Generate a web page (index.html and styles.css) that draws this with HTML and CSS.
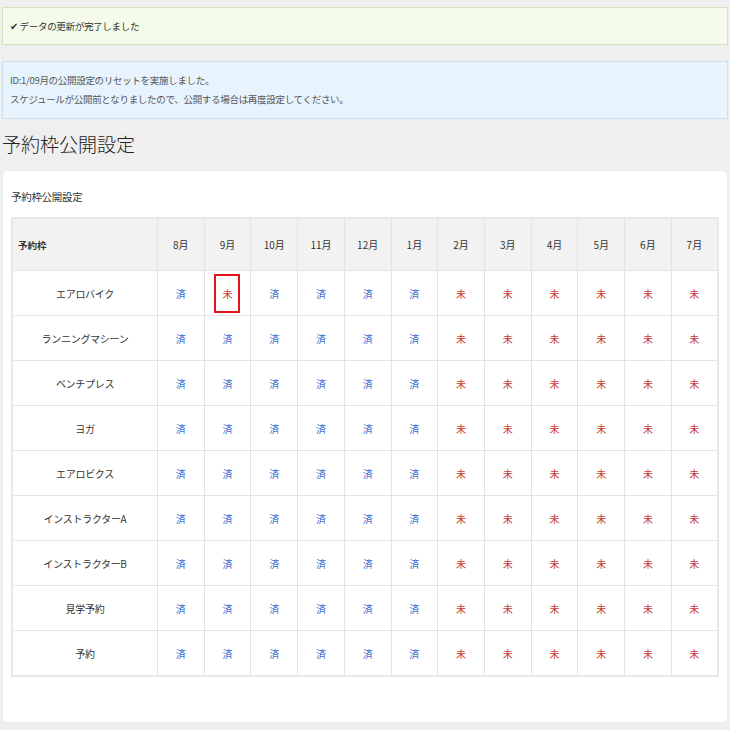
FILE: index.html
```html
<!DOCTYPE html>
<html lang="ja">
<head>
<meta charset="utf-8">
<link rel="stylesheet" href="styles.css">
</head>
<body>
<div class="alert alert-success">✔ データの更新が完了しました</div>
<div class="alert alert-info">ID:1/09月の公開設定のリセットを実施しました。<br>スケジュールが公開前となりましたので、公開する場合は再度設定してください。</div>
<h1 class="page-title">予約枠公開設定</h1>
<div class="card">
  <div class="card-title">予約枠公開設定</div>
  <table class="grid">
    <thead>
      <tr><th class="name-h">予約枠</th><th>8月</th><th>9月</th><th>10月</th><th>11月</th><th>12月</th><th>1月</th><th>2月</th><th>3月</th><th>4月</th><th>5月</th><th>6月</th><th>7月</th></tr>
    </thead>
    <tbody id="rows"></tbody>
  </table>
</div>
<script>
const names=["エアロバイク","ランニングマシーン","ベンチプレス","ヨガ","エアロビクス","インストラクターA","インストラクターB","見学予約","予約"];
const tb=document.getElementById('rows');
names.forEach((n,r)=>{
  const tr=document.createElement('tr');
  let h='<td class="name">'+n+'</td>';
  for(let c=0;c<12;c++){
    const done=c<6 && !(r===0&&c===1);
    if(r===0&&c===1){h+='<td><span class="mark no">未</span><span class="hl"></span></td>';}
    else h+='<td><span class="mark '+(done?'yes':'no')+'">'+(done?'済':'未')+'</span></td>';
  }
  tr.innerHTML=h;tb.appendChild(tr);
});
</script>
</body>
</html>
```
FILE: styles.css
```css
html,body{margin:0;padding:0;}
body{
  background:#efefef;
  font-family:"Noto Sans CJK JP","Noto Sans",sans-serif;
  color:#333;
  font-size:10px;
  padding:7px 2px 8px 2px;
}
.alert{
  box-sizing:border-box;
  padding:0 7px;
  font-size:9.5px;
  letter-spacing:-0.3px;
}
.alert-success{
  background:#f4fbea;
  border:1px solid #d4e4b8;
  height:38px;
  line-height:36px;
}
.alert-info{
  margin-top:16px;
  background:#e7f3fd;
  border:1px solid #cfdeea;
  padding-top:9px;
  padding-bottom:9px;
  line-height:19px;
  color:#555;
}
.page-title{
  margin:10px 0 0;
  font-weight:300;
  font-size:19px;
  line-height:30px;
  color:#222;
}
.card{
  background:#fff;
  margin:12px 1px 0;
  border-radius:4px;
  padding:15px 8px 45px;
  box-shadow:0 0 1px rgba(0,0,0,.08);
}
.card-title{
  font-size:10.5px;
  line-height:22px;
  margin-bottom:9px;
  letter-spacing:-0.3px;
}
.grid{
  width:100%;
  border-collapse:collapse;
  table-layout:fixed;
  border:2px solid #e8e8e8;
}
.grid th,.grid td{
  border:1px solid #e4e4e4;
  text-align:center;
  font-weight:normal;
  font-size:10px;
  padding:0;
}
.grid thead th{
  background:#f2f2f2;
  height:51px;
  color:#333;
}
.grid th.name-h{
  width:139px;
  text-align:left;
  padding-left:5px;
  font-weight:bold;
  font-size:9.5px;
}
.grid tbody td{height:44px;position:relative;}
.grid td.name{letter-spacing:-0.3px;}
.mark{font-size:10px;}
.mark.yes{color:#3f6fd1;}
.mark.no{color:#c73b35;}
.hl{
  position:absolute;
  left:9px;top:3px;
  width:22px;height:35px;
  border:2px solid #e3141b;
}
```
